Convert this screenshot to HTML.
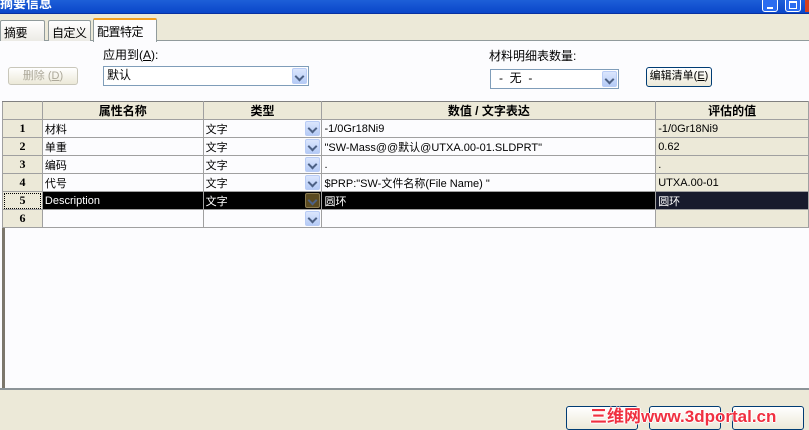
<!DOCTYPE html>
<html><head><meta charset="utf-8"><style>
*{box-sizing:border-box;margin:0;padding:0;white-space:nowrap}
body{width:809px;height:427px;overflow:hidden;background:#ece9d8;font-family:"Liberation Sans","Noto Sans CJK SC",sans-serif;font-size:12px;color:#000;position:relative}
.a{position:absolute}
.title{left:0;top:0;width:809px;height:14px;background:linear-gradient(#1d5fd8,#0a46c9);border-bottom:1px solid #0831a0;color:#fff;font-weight:bold;font-size:13px;line-height:8px;overflow:hidden}
.tb{top:-2px;width:16px;height:14px;border:1px solid #fff;border-radius:3px;background:#2a6cf0}
.tab{top:20px;height:21px;border:1px solid #919b9c;border-bottom:none;background:linear-gradient(#fff,#ecebe5);padding:3px 3px 0;font-size:12px;border-radius:2px 2px 0 0;letter-spacing:-0.5px}
.panel{left:0;top:40px;width:809px;height:350px;background:#fcfcfe;border-top:1px solid #919b9c;border-bottom:2px solid #8c9498}
.btn{border:1px solid #003c74;border-radius:3px;background:linear-gradient(#fff,#ece9d8);text-align:center;line-height:17px;font-size:11px}
.combo{border:1px solid #7f9db9;background:#fff;padding-left:3px;line-height:17px}
.dd{position:absolute;right:1px;top:1px;width:15px;bottom:1px;background:linear-gradient(#dbe6fd,#b5cbf6);border:1px solid #b9ccf5;border-radius:2px}
.dd:after{content:"";position:absolute;left:3px;top:4px;width:5px;height:5px;border-right:2px solid #4d6185;border-bottom:2px solid #4d6185;transform:rotate(45deg)}
table{position:absolute;left:2px;top:101px;border-collapse:collapse;table-layout:fixed}
td{border:1px solid #a0a0a0;height:18px;padding:0 2px;overflow:hidden;font-size:11px;position:relative}
th{background:#ece9d8;border:1px solid #a0a0a0;border-top:1px solid #808080;height:18px;font-size:12px}
.rh{background:#ece9d8;text-align:center;font-weight:bold;font-family:"Liberation Serif",serif;font-size:12px}
.ev{background:#ece9d8}
.sel td{background:#000;color:#fff}
.sel td.ev{background:#171a2c}
.sel td.rh{background:#ece9d8;color:#000;outline:1px dotted #000;outline-offset:-2px}
.sd{position:absolute;right:1px;top:1px;width:15px;height:15px;background:linear-gradient(#dbe6fd,#b5cbf6);border:1px solid #b9ccf5;border-radius:2px}
.sd:after{content:"";position:absolute;left:3px;top:3px;width:5px;height:5px;border-right:2px solid #4d6185;border-bottom:2px solid #4d6185;transform:rotate(45deg)}
.sel .sd{background:#5a4a20;border-color:#8a7a50}
</style></head><body>
<div class="a title">摘要信息</div>
<div class="a tb" style="left:762px"><div style="position:absolute;left:4px;top:8px;width:6px;height:2px;background:#fff"></div></div>
<div class="a tb" style="left:785px"><div style="position:absolute;left:3px;top:2px;width:8px;height:8px;border:1px solid #fff;border-top-width:2px"></div></div>
<div class="a" style="left:805px;top:0;width:4px;height:12px;background:#d8401c"></div>
<div class="a panel"></div>
<div class="a tab" style="left:0;width:45px">摘要</div>
<div class="a tab" style="left:48px;width:43px">自定义</div>
<div class="a tab" style="left:93px;top:18px;height:24px;width:64px;border-top:2px solid #f4a020;background:#fcfcfe">配置特定</div>
<div class="a" style="left:103px;top:46px">应用到(<u>A</u>):</div>
<div class="a btn" style="left:8px;top:67px;width:70px;height:18px;color:#aca899;border-color:#c9c7ba">删除 (<u>D</u>)</div>
<div class="a combo" style="left:103px;top:66px;width:206px;height:20px">默认<div class="dd"></div></div>
<div class="a" style="left:489px;top:47px">材料明细表数量:</div>
<div class="a combo" style="left:490px;top:69px;width:129px;height:20px;padding-left:8px">-&nbsp; 无&nbsp; -<div class="dd"></div></div>
<div class="a btn" style="left:646px;top:67px;width:66px;height:20px;color:#000">编辑清单(<u>E</u>)</div>
<div class="a" style="left:2px;top:101px;width:3px;height:287px;background:#7c776c"></div>
<table>
<colgroup><col style="width:40px"><col style="width:161px"><col style="width:119px"><col style="width:334px"><col style="width:153px"></colgroup>
<tr><th></th><th>属性名称</th><th>类型</th><th>数值 / 文字表达</th><th>评估的值</th></tr>
<tr><td class="rh">1</td><td>材料</td><td>文字<span class="sd"></span></td><td>-1/0Gr18Ni9</td><td class="ev">-1/0Gr18Ni9</td></tr>
<tr><td class="rh">2</td><td>单重</td><td>文字<span class="sd"></span></td><td>"SW-Mass@@默认@UTXA.00-01.SLDPRT"</td><td class="ev">0.62</td></tr>
<tr><td class="rh">3</td><td>编码</td><td>文字<span class="sd"></span></td><td>.</td><td class="ev">.</td></tr>
<tr><td class="rh">4</td><td>代号</td><td>文字<span class="sd"></span></td><td>$PRP:"SW-文件名称(File Name) "</td><td class="ev">UTXA.00-01</td></tr>
<tr class="sel"><td class="rh">5</td><td>Description</td><td>文字<span class="sd"></span></td><td>圆环</td><td class="ev">圆环</td></tr>
<tr><td class="rh">6</td><td></td><td><span class="sd"></span></td><td></td><td class="ev"></td></tr>
</table>
<div class="a btn" style="left:566px;top:406px;width:72px;height:24px"></div>
<div class="a btn" style="left:649px;top:406px;width:72px;height:24px"></div>
<div class="a btn" style="left:732px;top:406px;width:72px;height:24px"></div>
<div class="a" style="left:590px;top:402px;color:#f03040;font-size:17px;font-weight:bold;text-shadow:1px 0 #fff,-1px 0 #fff,0 1px #fff,0 -1px #fff">三维网www.3dportal.cn</div>
</body></html>
